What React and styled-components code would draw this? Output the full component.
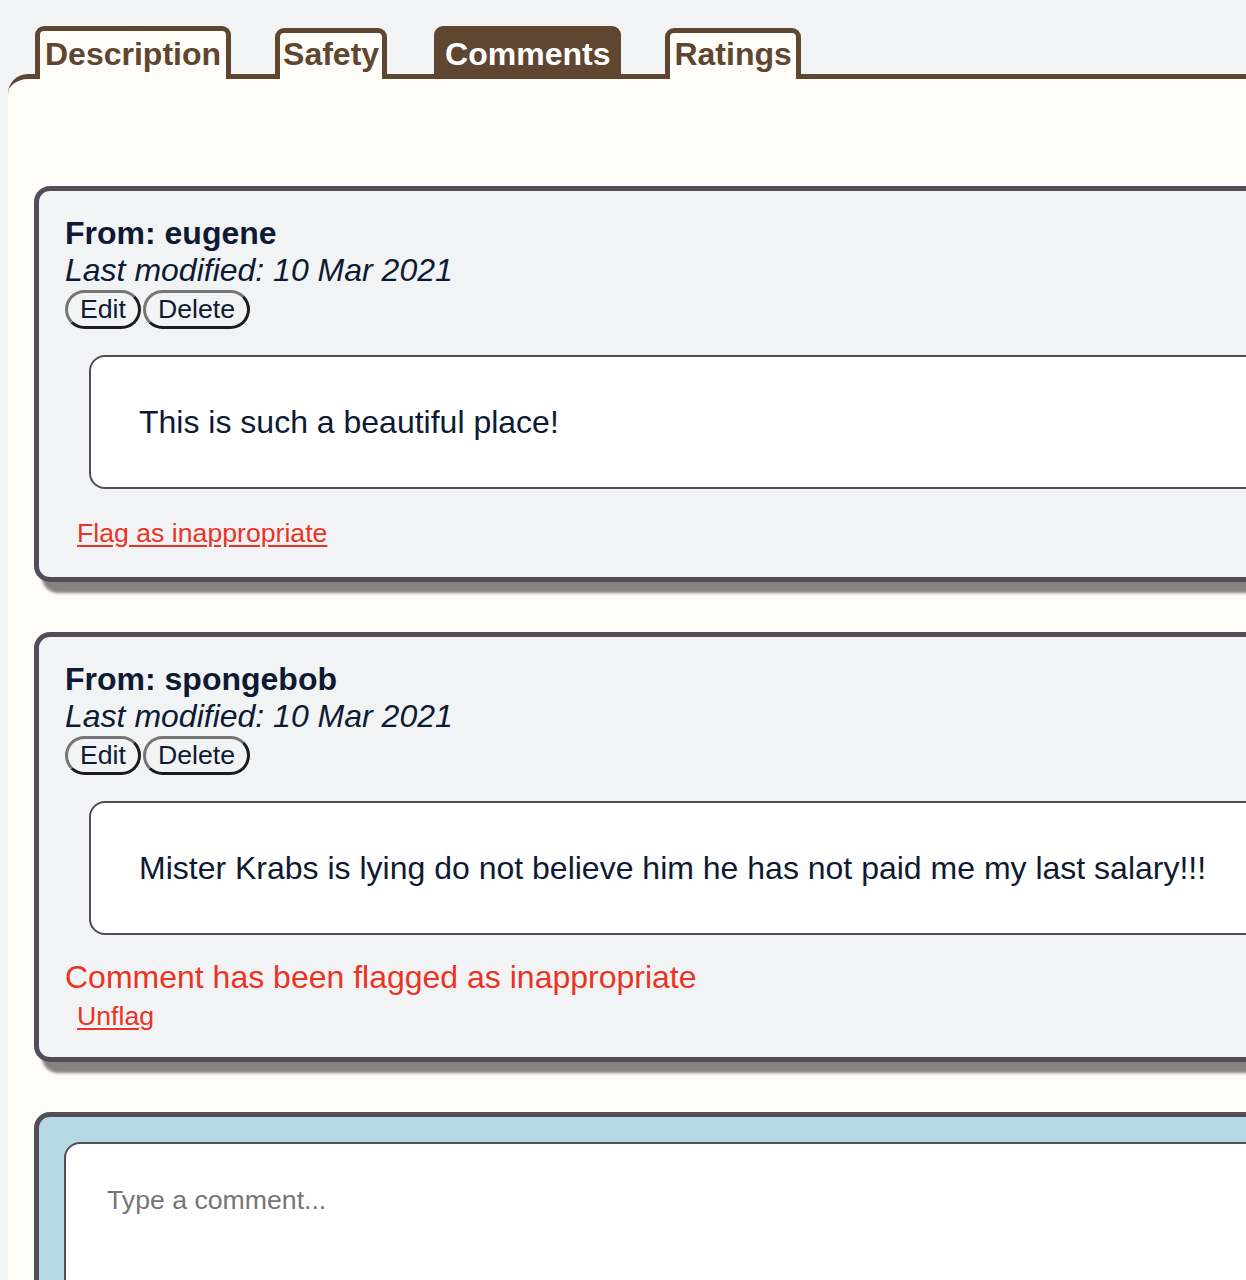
import React from "react";
import styled, { createGlobalStyle } from "styled-components";

const brown = "#5f4631";
const slate = "#524d57";
const ink = "#0e1a34";
const red = "#eb3323";

const GlobalStyle = createGlobalStyle`
  html {
    overflow: hidden;
    background: #f2f3f5;
  }
  body {
    margin: 8px 0 0 8px;
    font-family: "Liberation Sans", Arial, sans-serif;
    color: ${ink};
  }
`;

const Page = styled.div`
  width: 1600px;
`;

const TabBar = styled.div`
  display: flex;
  align-items: flex-end;
  gap: 44px;
  padding: 18px 0 0 27px;
  position: relative;
  z-index: 1;
`;

const Tab = styled.div`
  box-sizing: border-box;
  height: ${(p) => (p.low ? 51 : 53)}px;
  margin-left: ${(p) => p.shift || 0}px;
  padding: 0 ${(p) => p.pad}px;
  border: 5px solid ${brown};
  border-bottom: none;
  border-radius: 9px 9px 0 0;
  background: ${(p) => (p.active ? brown : "#fdfcf7")};
  color: ${(p) => (p.active ? "#ffffff" : brown)};
  font-size: 32px;
  font-weight: bold;
  line-height: ${(p) => (p.low ? 42 : 46)}px;
  white-space: nowrap;
`;

const Panel = styled.div`
  margin-top: -5px;
  background: #fdfcf7;
  border-top: 5px solid ${brown};
  border-top-left-radius: 20px;
  padding: 107px 0 40px 26px;
  display: flex;
  flex-direction: column;
  gap: 50px;
`;

const Card = styled.div`
  width: 1500px;
  box-sizing: border-box;
  border: 5px solid ${slate};
  border-radius: 16px;
  background: ${(p) => (p.compose ? "#b5d8e3" : "#f2f3f5")};
  box-shadow: 8px 11px 3px rgba(0, 0, 0, 0.48);
  padding: ${(p) => (p.compose ? "25px 25px" : "24px 26px 0")};
`;

const From = styled.div`
  font-size: 32px;
  font-weight: bold;
  line-height: 37px;
`;

const Modified = styled.div`
  font-size: 32px;
  font-style: italic;
  line-height: 37px;
`;

const Actions = styled.div`
  display: flex;
  gap: 2px;
  margin-top: 1px;
`;

const Button = styled.button`
  font-family: "Liberation Sans", Arial, sans-serif;
  font-size: 26.67px;
  line-height: 29px;
  color: ${ink};
  background: #f2f3f5;
  padding: 2px 12px;
  border: 3px solid;
  border-color: #767676 #1c1c1c #1c1c1c #767676;
  border-radius: 20px;
`;

const Body = styled.div`
  margin: 26px 0 0 24px;
  background: #ffffff;
  border: 2px solid ${slate};
  border-radius: 16px;
  padding: 47px 48px 46px;
  font-size: 32px;
  line-height: 37px;
`;

const FlagLink = styled.a`
  display: block;
  margin-top: ${(p) => p.top}px;
  padding: 0 0 ${(p) => p.bottom}px 12px;
  font-size: 26.67px;
  line-height: 32px;
  color: ${red};
  text-decoration: underline;
  text-underline-offset: 3px;
`;

const FlaggedNote = styled.div`
  margin-top: 24px;
  font-size: 32px;
  line-height: 37px;
  color: ${red};
`;

const CommentInput = styled.textarea`
  display: block;
  width: 100%;
  box-sizing: border-box;
  min-height: 220px;
  resize: none;
  background: #ffffff;
  border: 2px solid ${slate};
  border-radius: 16px;
  padding: 41px 41px;
  font-family: "Liberation Sans", Arial, sans-serif;
  font-size: 26.67px;
  color: ${ink};
  &::placeholder {
    color: #757575;
  }
`;

const tabs = [
  { label: "Description", pad: 5 },
  { label: "Safety", low: true, pad: 3 },
  { label: "Comments", active: true, pad: 6, shift: 3 },
  { label: "Ratings", low: true, pad: 4 },
];

const comments = [
  { author: "eugene", date: "10 Mar 2021", text: "This is such a beautiful place!", flagged: false },
  {
    author: "spongebob",
    date: "10 Mar 2021",
    text: "Mister Krabs is lying do not believe him he has not paid me my last salary!!!",
    flagged: true,
  },
];

function Comment({ c }) {
  return (
    <Card>
      <From>From: {c.author}</From>
      <Modified>Last modified: {c.date}</Modified>
      <Actions>
        <Button>Edit</Button>
        <Button>Delete</Button>
      </Actions>
      <Body>{c.text}</Body>
      {c.flagged ? (
        <>
          <FlaggedNote>Comment has been flagged as inappropriate</FlaggedNote>
          <FlagLink href="#" top={4} bottom={25}>Unflag</FlagLink>
        </>
      ) : (
        <FlagLink href="#" top={28} bottom={28}>Flag as inappropriate</FlagLink>
      )}
    </Card>
  );
}

export default function App() {
  return (
    <Page>
      <GlobalStyle />
      <TabBar>
        {tabs.map((t) => (
          <Tab key={t.label} active={t.active} low={t.low} pad={t.pad} shift={t.shift}>{t.label}</Tab>
        ))}
      </TabBar>
      <Panel>
        {comments.map((c) => (
          <Comment key={c.author} c={c} />
        ))}
        <Card compose>
          <CommentInput placeholder="Type a comment..." />
        </Card>
      </Panel>
    </Page>
  );
}
